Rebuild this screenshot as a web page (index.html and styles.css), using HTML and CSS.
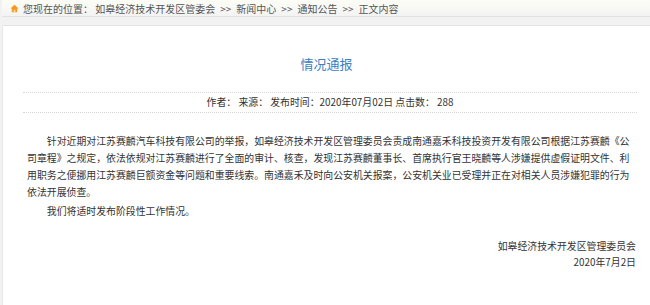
FILE: index.html
```html
<!DOCTYPE html>
<html lang="zh-CN">
<head>
    <meta charset="UTF-8">
    <meta name="viewport" content="width=device-width, initial-scale=1.0">
    <title>情况通报</title>
    <link rel="stylesheet" href="styles.css">
</head>
<body>
    <div class="crumb">
        <svg class="home-icon" width="9" height="9" viewBox="0 0 10 10">
            <path d="M5 0.8 L9.4 5 L8 5 L8 9.2 L2 9.2 L2 5 L0.6 5 Z" fill="#f39a1e"/>
            <rect x="4.1" y="6.4" width="1.8" height="2.8" fill="#fbe3b8"/>
        </svg>
        <span>您现在的位置： 如皋经济技术开发区管委会<span class="sep">&gt;&gt;</span>新闻中心<span class="sep">&gt;&gt;</span>通知公告<span class="sep">&gt;&gt;</span>正文内容</span>
    </div>

    <div class="article">
        <h1 class="title">情况通报</h1>
        <div class="meta">作者： 来源： 发布时间：2020年07月02日 点击数： 288</div>

        <div class="content">
            <p class="indent">针对近期对江苏赛麟汽车科技有限公司的举报，如皋经济技术开发区管理委员会责成南通嘉禾科技投资开发有限公司根据江苏赛麟《公司章程》之规定，依法依规对江苏赛麟进行了全面的审计、核查，发现江苏赛麟董事长、首席执行官王晓麟等人涉嫌提供虚假证明文件、利用职务之便挪用江苏赛麟巨额资金等问题和重要线索。南通嘉禾及时向公安机关报案，公安机关业已受理并正在对相关人员涉嫌犯罪的行为依法开展侦查。</p>
            <p class="indent second">我们将适时发布阶段性工作情况。</p>
            <div class="sign">
                <p>如皋经济技术开发区管理委员会</p>
                <p>2020年7月2日</p>
            </div>
        </div>
    </div>
</body>
</html>
```

FILE: styles.css
```css
html, body {
    height: 100%;
}
body {
    margin: 0;
    padding-left: 2px;
    background-color: #f2f2f2;
    font-family: "Noto Sans CJK SC", "Microsoft YaHei", sans-serif;
    color: #333;
    overflow: hidden;
}
.crumb {
    display: flex;
    align-items: center;
    height: 16px;
    padding-left: 8px;
    border-bottom: 1px solid #e2e2e2;
    background: linear-gradient(#fdfdf7, #f3f3f3);
    font-size: 10px;
    color: #555;
    white-space: nowrap;
}
.home-icon {
    margin-right: 4px;
}
.sep {
    margin: 0 5px;
}
.article {
    box-sizing: border-box;
    margin-top: 8px;
    height: calc(100% - 25px);
    padding-top: 30px;
    background-color: #fff;
    border-top: 1px solid #e4e4e4;
    border-left: 1px solid #e8e8e8;
}
.title {
    margin: 0;
    font-size: 13px;
    font-weight: normal;
    line-height: 16px;
    text-align: center;
    color: #3b7fc4;
}
.meta {
    margin: 20px 13px 0 20px;
    height: 19px;
    line-height: 19px;
    border-top: 1px dotted #d6d6d6;
    border-bottom: 1px dotted #d6d6d6;
    text-align: center;
    font-size: 9.9px;
}
.content {
    padding: 20px 14px 0 24px;
    font-size: 9.9px;
    line-height: 17px;
}
.content p {
    margin: 0;
}
.indent {
    text-indent: 2em;
}
.content .second {
    margin-top: 2px;
}
.sign {
    margin-top: 18px;
    text-align: right;
    line-height: 16px;
}
```
